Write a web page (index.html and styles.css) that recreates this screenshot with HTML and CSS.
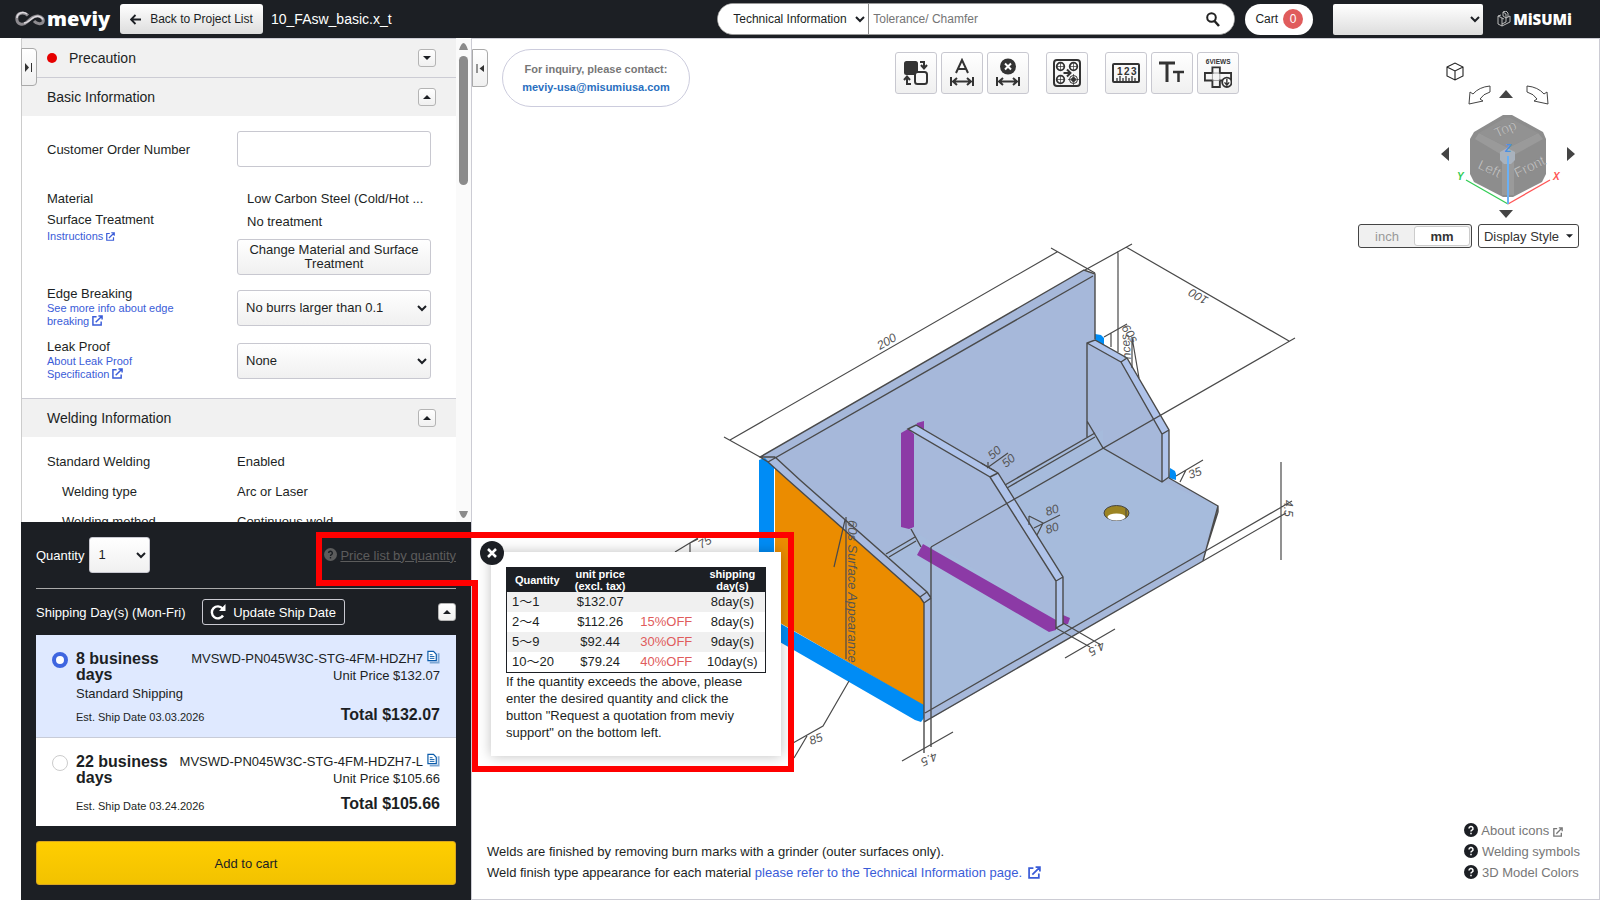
FILE: index.html
```html
<!DOCTYPE html>
<html lang="en">
<head>
    <meta charset="utf-8">
    <title>meviy</title>
    <link rel="stylesheet" href="styles.css">
</head>
<body>
    <!-- Shared icons -->
    <svg class="defs">
        <symbol id="ext" viewBox="0 0 12 12"><path d="M5 2H1v9h9V7M7 1h4v4M11 1L4 8" fill="none" stroke="currentColor" stroke-width="1.6"/></symbol>
        <symbol id="help" viewBox="0 0 14 14"><circle cx="7" cy="7" r="7" fill="currentColor"/><path d="M5 5.500a2 2 0 1 1 3 1.700q-1 .5-1 1.300M7 9.700v1.500" fill="none" stroke="var(--mark)" stroke-width="1.500"/></symbol>
        <symbol id="copy" viewBox="0 0 14 14"><path d="M3 13h9.500V3" fill="none" stroke="#7fa8d4" stroke-width="2"/><path d="M1 1h6l3 3v7H1z" fill="#fff" stroke="#0b5cab" stroke-width="1.300"/><path d="M3 4.500h3M3 6.500h5M3 8.500h5" stroke="#0b5cab"/></symbol>
        <symbol id="up" viewBox="0 0 8 4"><path d="M0 4L4 0L8 4z" fill="#1c1f24"/></symbol>
        <symbol id="down" viewBox="0 0 8 4"><path d="M0 0L4 4L8 0z" fill="#1c1f24"/></symbol>
    </svg>

    <!-- Header -->
    <header class="header">
        <a class="logo" href="#">
            <svg width="30" height="16" viewBox="0 0 30 16"><path d="M13 4.500C9 .5 1.800 1.500 1.800 7.500s6.200 7.500 10.200 3.500S19 4.500 23 5s6 3.500 5 6-6 2.500-9-1" fill="none" stroke="#8d8a8f" stroke-width="3"/><path d="M12 3C8 0 2 2 2 7M9 12c6 0 8-8 15-6.500q3 .8 4 3" fill="none" stroke="#dedbe0" stroke-width="1.500"/></svg>
            <span>meviy</span>
        </a>
        <button class="back">
            <svg width="11" height="11" viewBox="0 0 11 11"><path d="M11 5.500H1M5.500 1L1 5.500L5.500 10" fill="none" stroke="#1c1f24" stroke-width="1.800"/></svg>
            Back to Project List
        </button>
        <span class="filename">10_FAsw_basic.x_t</span>
        <form class="search">
            <select aria-label="Search category"><option>Technical Information</option></select>
            <input type="text" placeholder="Tolerance/ Chamfer" aria-label="Search">
            <button type="button" aria-label="Search">
                <svg width="14" height="15" viewBox="0 0 14 15"><circle cx="5.500" cy="5.500" r="4.300" fill="none" stroke="#222" stroke-width="2"/><path d="M8.500 9l4.500 5" stroke="#222" stroke-width="2.500"/></svg>
            </button>
        </form>
        <button class="cart">Cart <span>0</span></button>
        <select class="account" aria-label="Account"><option></option></select>
        <a class="misumi" href="#">
            <svg width="14" height="16" viewBox="0 0 14 16"><path d="M1 5l4 2v8l-4-2zM5 7l2 1M5 15l8-4V5l-4 2v4l-4 2M9 7L6 5V1l3-1 2 2v4M1 5l3-1M6 1l3 2v4" fill="none" stroke="#ccc" stroke-width=".9"/></svg>
            <span>MiSUMi</span>
        </a>
    </header>

    <main class="main">
        <aside class="panel">
            <button class="tab tab-left" aria-label="Expand panel"><svg width="8" height="9" viewBox="0 0 8 9"><path d="M0 0v9l4-4.500z" fill="#333"/><path d="M6.500 0v9" stroke="#333"/></svg></button>

            <div class="scroll">
                <div class="sections">
                    <div class="section-head">
                        <i class="dot"></i><span class="precaution">Precaution</span>
                        <button class="fold" aria-label="Open"><svg width="8" height="4"><use href="#down"/></svg></button>
                    </div>

                    <div class="section-head">
                        <span>Basic Information</span>
                        <button class="fold" aria-label="Close"><svg width="8" height="4"><use href="#up"/></svg></button>
                    </div>
                    <div class="basic">
                        <div class="row order">
                            <label for="order">Customer Order Number</label>
                            <input id="order" type="text">
                        </div>
                        <div class="row material">
                            <div>
                                <p>Material</p>
                                <p>Surface Treatment</p>
                                <a href="#">Instructions <svg width="9" height="9"><use href="#ext"/></svg></a>
                            </div>
                            <div>
                                <p class="value">Low Carbon Steel (Cold/Hot ...</p>
                                <p class="value second">No treatment</p>
                                <button class="change">Change Material and Surface Treatment</button>
                            </div>
                        </div>
                        <div class="row option">
                            <div>
                                <label for="edge">Edge Breaking</label>
                                <a href="#">See more info about edge breaking <svg width="11" height="11"><use href="#ext"/></svg></a>
                            </div>
                            <select id="edge"><option>No burrs larger than 0.1</option></select>
                        </div>
                        <div class="row option">
                            <div>
                                <label for="leak">Leak Proof</label>
                                <a href="#">About Leak Proof Specification <svg width="11" height="11"><use href="#ext"/></svg></a>
                            </div>
                            <select id="leak"><option>None</option></select>
                        </div>
                    </div>

                    <div class="section-head">
                        <span>Welding Information</span>
                        <button class="fold" aria-label="Close"><svg width="8" height="4"><use href="#up"/></svg></button>
                    </div>
                    <dl class="welding">
                        <dt>Standard Welding</dt><dd>Enabled</dd>
                        <dt class="sub">Welding type</dt><dd>Arc or Laser</dd>
                        <dt class="sub">Welding method</dt><dd>Continuous weld</dd>
                    </dl>
                </div>
                <div class="scrollbar">
                    <svg width="9" height="7" viewBox="0 0 9 7"><path d="M0 7Q4.500-7 9 7z" fill="#8b8b8b"/></svg>
                    <i></i>
                    <svg class="end" width="9" height="7" viewBox="0 0 9 7"><path d="M0 0Q4.500 14 9 0z" fill="#8b8b8b"/></svg>
                </div>
            </div>

            <!-- Quantity and shipping -->
            <div class="quote">
                <div class="quantity">
                    <label for="qty">Quantity</label>
                    <select id="qty"><option>1</option></select>
                    <a href="#"><svg width="13" height="13"><use href="#help"/></svg> <span>Price list by quantity</span></a>
                </div>
                <div class="shipping">
                    <span>Shipping Day(s) (Mon-Fri)</span>
                    <button class="update"><svg width="16" height="16" viewBox="0 0 16 16"><path d="M12.500 4.500A6 6 0 1 0 13 11.500" fill="none" stroke="#fff" stroke-width="2.400"/><path d="M15.500 0v7H9z" fill="#fff"/></svg>Update Ship Date</button>
                    <button class="fold" aria-label="Close"><svg width="8" height="4"><use href="#up"/></svg></button>
                </div>
                <div class="plans">
                    <label class="plan selected">
                        <input type="radio" name="plan" checked>
                        <span class="days"><b>8 business days</b><span class="standard">Standard Shipping</span><small>Est. Ship Date 03.03.2026</small></span>
                        <span class="price"><span>MVSWD-PN045W3C-STG-4FM-HDZH7 <svg width="13" height="14"><use href="#copy"/></svg></span><span>Unit Price $132.07</span><b>Total $132.07</b></span>
                    </label>
                    <label class="plan">
                        <input type="radio" name="plan">
                        <span class="days"><b>22 business days</b><small>Est. Ship Date 03.24.2026</small></span>
                        <span class="price"><span>MVSWD-PN045W3C-STG-4FM-HDZH7-L <svg width="13" height="14"><use href="#copy"/></svg></span><span>Unit Price $105.66</span><b>Total $105.66</b></span>
                    </label>
                </div>
                <button class="add">Add to cart</button>

                <!-- Price list popup -->
                <div class="popup">
                    <button class="close" aria-label="Close"><svg width="10" height="10" viewBox="0 0 10 10"><path d="M1 1l8 8M9 1L1 9" stroke="#fff" stroke-width="2.500"/></svg></button>
                    <table>
                        <tr><th>Quantity</th><th>unit price<br>(excl. tax)</th><th></th><th>shipping<br>day(s)</th></tr>
                        <tr><td>1～1</td><td>$132.07</td><td></td><td>8day(s)</td></tr>
                        <tr><td>2～4</td><td>$112.26</td><td>15%OFF</td><td>8day(s)</td></tr>
                        <tr><td>5～9</td><td>$92.44</td><td>30%OFF</td><td>9day(s)</td></tr>
                        <tr><td>10～20</td><td>$79.24</td><td>40%OFF</td><td>10day(s)</td></tr>
                    </table>
                    <p>If the quantity exceeds the above, please enter the desired quantity and click the button "Request a quotation from meviy support" on the bottom left.</p>
                </div>
                <svg class="marker" width="478" height="240" viewBox="0 0 478 240"><path d="M3 3H475V237H159V51H3z" fill="none" stroke="#f00" stroke-width="6"/></svg>
            </div>
        </aside>

        <section class="viewer">
            <svg class="model" viewBox="472 39 1127 860">
                <!-- plates -->
                <path d="M760 457L1084 270L1095 275V339L1127 358L1169 430V478L1218 506L1203 561L925 722V603L775 466z" fill="#a6b8da"/>
                <path d="M1003 487L1103 430L1103 448L1162 482L1218 506L1202 553L925 713L924 603L886 554z" fill="#a6bbdc"/>
                <path d="M775 468L920 597L924 603V706L775 620z" fill="#eb8c00"/>
                <path d="M759 460L765 458L774 467V620L924 705V718L921 722L915 720L759 630z" fill="#008cf5"/>
                <g fill="#008cf5"><path d="M1095 334l6 1 3 3v7l-9-4z"/><path d="M1170 468l5 3 1 3v6l-7-2z"/></g>
                <path d="M775 457L927 592L931 597V717L924 721V603L920 597L768 462z" fill="#a9bbe0"/>
                <path d="M908 429L916 425L998 473L1063 577V624L1056 628L1049 617L911 529z" fill="#a7b9db"/>
                <path d="M901 433L908 429L914 434V527L909 529L901 527zM917 423L924 421V430L916 426z" fill="#8c3aa6"/>
                <path d="M923 544L1056 620V630L1049 632L917 555zM1063 615L1070 618L1068 624H1063z" fill="#8c3aa6"/>
                <path d="M908 429L916 425L998 473L1063 577V624L1056 628V581L990 477z" fill="#afc3ea"/>
                <path d="M1087 343L1095 340L1127 358L1169 430V477L1162 482V434L1121 362z" fill="#afc3ea"/>
                <g fill="none" stroke="#4a4a4a" stroke-width="1.400">
                    <path d="M1095 339V274L1084 270L760 457L768 462L1093 276M760 457L775 457M768 462L788 480L920 597L924 603V722L1203 561M775 457L800 480L927 592L931 598L924 603M920 597L927 592M931 547V747M924 722V753M925 713L1202 553"/>
                    <path d="M1087 437V343L1095 340L1127 358L1169 430V477L1162 482L1103 448L1087 421M1087 343L1121 362L1127 358M1121 362L1162 434L1169 430M1162 434V482M1169 478L1218 506L1203 561M1218 506V512L1205 553"/>
                    <path d="M908 429L916 425L998 473L1063 577V624L1056 628V581L990 477zM990 477L998 473M1056 581L1063 577M911 529L921 547"/>
                    <path d="M886 554L915 537M889 557L916 541M1005 485L1095 433M1007 488L1095 437"/>
                </g>
                <!-- hole -->
                <ellipse cx="1116.500" cy="513" rx="12.500" ry="7.500" fill="#9c8423" stroke="#444"/>
                <ellipse cx="1116.500" cy="517" rx="9" ry="3.500" fill="#fff"/>
                <path d="M1126 508v9" stroke="#444"/>
                <!-- dimension lines -->
                <g fill="none" stroke="#4a4a4a" stroke-width="1.200">
                    <path d="M724 437L760 457M730 440L1057 252M1051 248L1095 273M1085 270L1132 244M1126 247L1289 341M1118 251V352M931 547L1295 338"/>
                    <path d="M1104 337L1127 324M1111 333V347M1132 337V368M1132 337L1139 378"/>
                    <path d="M1176 476L1203 460M1186 470L1180 482M1281 462V560M1202 553L1292 501M1203 561L1286 513"/>
                    <path d="M1065 658L1115 629M1056 628L1090 647M1063 623L1101 645M902 761L953 732"/>
                    <path d="M849 681L823 726L793 743M807 736L794 758M675 552L698 538M690 543v10M690 543L698 539"/>
                    <path d="M846 517V659M845 520L834 567M987 468L1008 453M981 463L995 471M988 462v6"/>
                    <path d="M1060 515L1034 528M1029 516L1043 523L1037 535M1029 516V525"/>
                </g>
                <g class="dims">
                    <text transform="translate(880 350) rotate(-30)">200</text>
                    <text transform="translate(1209 298) rotate(210)">100</text>
                    <text transform="translate(992 460) rotate(-40)">50</text>
                    <text transform="translate(1006 468) rotate(-40)">50</text>
                    <text transform="translate(1047 516) rotate(-18)">80</text>
                    <text transform="translate(1047 534) rotate(-18)">80</text>
                    <text transform="translate(1190 479) rotate(-20)">35</text>
                    <text transform="translate(811 745) rotate(-20)">85</text>
                    <text transform="translate(701 549) rotate(-30)">75</text>
                    <text transform="translate(935 752) rotate(155)">4.5</text>
                    <text transform="translate(1102 641) rotate(150)">4.5</text>
                    <text transform="translate(1284 500) rotate(90)">4.5</text>
                    <text class="surface" transform="translate(848 520) rotate(90)">60s Surface Appearance</text>
                    <text transform="translate(1131 359) rotate(-95)">nces</text>
                    <text transform="translate(1121 328) rotate(55)">60s</text>
                </g>
            </svg>

            <button class="tab" aria-label="Collapse panel"><svg width="8" height="9" viewBox="0 0 8 9"><path d="M8 1v7L3.500 4.500z" fill="#333"/><path d="M1 0v9" stroke="#333"/></svg></button>

            <div class="inquiry">For inquiry, please contact:<br><a href="#">meviy-usa@misumiusa.com</a></div>

            <div class="tools">
                <button aria-label="Swap"><svg viewBox="0 0 28 28"><rect x="2" y="2" width="14" height="14" rx="2.500" fill="#333"/><rect x="13" y="13" width="12" height="12" rx="2.500" fill="#f8f8f8" stroke="#333" stroke-width="2"/><path d="M18 3h4v5M19 6l3 3.500L25 6M9 25H5v-6M2 21l3-3.500L8 21" fill="none" stroke="#333" stroke-width="2"/></svg></button>
                <button aria-label="Text dimension"><svg viewBox="0 0 28 28" fill="none" stroke="#333" stroke-width="2"><path d="M8 14L14 1l6 13M10 10h8M3 18v9M25 18v9M5 22.500h18M9 19l-4 3.500L9 26M19 19l4 3.500L19 26"/></svg></button>
                <button aria-label="Delete dimension"><svg viewBox="0 0 28 28" fill="none" stroke="#333" stroke-width="2"><circle cx="14" cy="7.500" r="8" fill="#333" stroke="none"/><path d="M11 4.500l6 6M17 4.500l-6 6" stroke="#fff"/><path d="M3 18v9M25 18v9M5 22.500h18M9 19l-4 3.500L9 26M19 19l4 3.500L19 26"/></svg></button>
                <button class="apart" aria-label="Holes"><svg viewBox="0 0 28 28" fill="none" stroke="#333"><rect x="1" y="1" width="26" height="26" rx="3" stroke-width="2"/><g stroke-width="1.800"><circle cx="7.500" cy="7.500" r="3.800"/><circle cx="20.500" cy="7.500" r="3.800"/><circle cx="7.500" cy="20.500" r="3.800"/></g><circle cx="20.500" cy="20.500" r="4"/><circle cx="20.500" cy="20.500" r="2" fill="#333"/><path d="M7.500 3v9M3 7.500h9M20.500 3v9M16 7.500h9M7.500 16v9M3 20.500h9M20.500 15v11M15 20.500h11" stroke-width=".7"/><path d="M10.500 14h6M14 10.500l3.500 3.500-3.500 3.500" stroke-width="2"/></svg></button>
                <button class="apart" aria-label="Measure"><svg viewBox="0 0 28 28"><rect x="1" y="5" width="26" height="18" rx="1" fill="none" stroke="#333" stroke-width="2"/><path d="M5 22v-3M8 22v-5M11 22v-3M14 22v-5M17 22v-3M20 22v-5M23 22v-3" stroke="#333" stroke-width="1.300"/><text x="5" y="16" font-size="10">1</text><text x="12" y="16" font-size="10">2</text><text x="19" y="16" font-size="10">3</text></svg></button>
                <button aria-label="Text size"><svg viewBox="0 0 28 28"><path d="M1 4h16M9 4v19" stroke="#333" stroke-width="3"/><path d="M15 13h11M20.500 13v10" stroke="#333" stroke-width="2.500"/></svg></button>
                <button aria-label="6 views"><svg viewBox="0 0 30 32"><text x="2" y="6" font-size="7">6VIEWS</text><path d="M9 10h8v6h12v8H17v7H9v-7H1v-8h8z" fill="none" stroke="#333" stroke-width="2"/><path d="M9 16h8v8H9z" fill="none" stroke="#777" stroke-width=".7"/><circle cx="24.500" cy="26" r="5" fill="#fff" stroke="#333" stroke-width="2"/><path d="M24.500 22.500v6M22 26l2.500 3 2.500-3" fill="none" stroke="#333" stroke-width="1.500"/></svg></button>
            </div>

            <div class="view-controls">
                <svg width="140" height="158" viewBox="1440 61 140 158">
                    <path d="M1448 67l8-4 8 4v9l-8 4-8-4zM1448 67l8 4 8-4M1456 71v9" fill="none" stroke="#222" stroke-width="1.100"/>
                    <path d="M1491 86v6q-7 2-10 7l3 2-14 3 1-12 3 2q6-7 17-8zM1528 86v6q7 2 10 7l-3 2 14 3-1-12-3 2q-6-7-17-8z" fill="#fff" stroke="#444"/>
                    <path d="M1500 98l7-8 7 8zM1500 210l7 8 7-8zM1450 147v14l-8-7zM1568 147v14l8-7z" fill="#444"/>
                    <path d="M1504 115h9l31 17 3 7v35l-4 8-29 15h-10l-29-15-4-8v-35l4-7z" fill="#8d8d8d"/>
                    <path d="M1476 139l4-6 29 15 30-15 5 6-29 16v40h-12v-40z" fill="#9a9a9a"/>
                    <path d="M1480 133l26-15h5l28 15-30 15z" fill="#929292"/>
                    <path d="M1508 148l8 4v8l-4 4h-7l-4-4v-8z" fill="#a9b2bd"/>
                    <g class="faces"><text transform="translate(1498 138) rotate(-25)">Top</text><text transform="translate(1478 168) rotate(25)">Left</text><text transform="translate(1518 178) rotate(-26)">Front</text></g>
                    <path d="M1509 204L1467 180" stroke="#3c5" stroke-width="1.300"/><path d="M1509 204L1551 180" stroke="#f55" stroke-width="1.300"/><path d="M1509 204V156" stroke="#6ab0f5" stroke-width="2"/>
                    <g class="axis"><text x="1458" y="180" fill="#3c5">Y</text><text x="1554" y="180" fill="#f55">X</text><text x="1506" y="152" fill="#4a90e0">Z</text></g>
                </svg>
                <div class="units">
                    <div class="switch"><button>inch</button><button class="on">mm</button></div>
                    <button class="style">Display Style <svg width="7" height="4"><use href="#down"/></svg></button>
                </div>
            </div>

            <footer class="notes">
                <p>Welds are finished by removing burn marks with a grinder (outer surfaces only).<br>Weld finish type appearance for each material <a href="#">please refer to the Technical Information page. <svg width="13" height="13"><use href="#ext"/></svg></a></p>
                <nav>
                    <a href="#"><svg width="14" height="14"><use href="#help"/></svg> About icons <svg width="10" height="10"><use href="#ext"/></svg></a>
                    <a href="#"><svg width="14" height="14"><use href="#help"/></svg> Welding symbols</a>
                    <a href="#"><svg width="14" height="14"><use href="#help"/></svg> 3D Model Colors</a>
                </nav>
            </footer>
        </section>
    </main>
</body>
</html>
```
FILE: styles.css
```css
* {
    box-sizing: border-box;
}

body {
    margin: 0;
    height: 100vh;
    display: flex;
    flex-direction: column;
    overflow: hidden;
    color: #1c1f24;
    background: #fff;
    font-family: "Liberation Sans", "Noto Sans CJK JP", sans-serif;
    font-size: 13px;
}

button, select, input {
    margin: 0;
    font-family: inherit;
    font-size: 13px;
    color: #1c1f24;
}

button {
    padding: 0;
    display: flex;
    align-items: center;
    justify-content: center;
    border: 1px solid #c8c8d0;
    border-radius: 3px;
    background: linear-gradient(#fff, #f0f0f0);
}

p, dl, dd {
    margin: 0;
}

a {
    color: #3a5cd8;
    text-decoration: none;
}

svg {
    flex: none;
}

.defs {
    position: absolute;
    width: 0;
    height: 0;
}

/* Header */
.header {
    flex: none;
    height: 38px;
    padding: 0 28px 0 15px;
    display: flex;
    align-items: center;
    background: #1c1f24;
    color: #fff;
}

.logo {
    display: flex;
    align-items: center;
    gap: 2px;
    width: 105px;
    color: #fff;
    font: 800 20px/26px "Open Sans", sans-serif;
}

.back {
    width: 143px;
    height: 30px;
    gap: 9px;
    border: 0;
    background: linear-gradient(#fff, #ddd);
    font-size: 12px;
}

.filename {
    margin: 0 auto 0 8px;
    font-size: 14px;
}

.search {
    display: flex;
    width: 518px;
    height: 32px;
    border-radius: 16px;
    border: 1px solid #999;
    background: #fff;
    overflow: hidden;
}

.search select {
    width: 151px;
    padding-left: 11px;
    border: 0;
    border-right: 1px solid #888;
    border-radius: 0;
    background: #fff;
    font-size: 12px;
}

.search input {
    flex: 1;
    border: 0;
    padding: 0 4px;
    font-size: 12px;
}

.search button {
    width: 42px;
    border: 0;
    background: #fff;
}

.cart {
    width: 68px;
    height: 31px;
    margin: 0 20px 0 10px;
    gap: 5px;
    border: 0;
    border-radius: 16px;
    background: #fff;
    font-size: 12px;
}

.cart span {
    width: 20px;
    line-height: 20px;
    border-radius: 50%;
    background: #e05c5c;
    color: #fff;
}

.account {
    width: 150px;
    height: 31px;
    padding-right: 5px;
    border: 0;
    border-radius: 2px;
    background: linear-gradient(#fff, #ddd);
}

.misumi {
    display: flex;
    align-items: center;
    gap: 2px;
    margin-left: 14px;
    color: #fff;
    font: 800 15px/20px "Open Sans", sans-serif;
}

/* Left panel */
.main {
    flex: 1;
    min-height: 0;
    display: flex;
}

.panel {
    position: relative;
    flex: none;
    width: 450px;
    margin-left: 21px;
    display: flex;
    flex-direction: column;
}

.scroll {
    flex: 1;
    min-height: 0;
    display: flex;
    border-left: 1px solid #ccc;
    overflow: hidden;
}

.sections {
    flex: 1;
}

.section-head {
    display: flex;
    align-items: center;
    height: 39px;
    padding: 0 20px 0 25px;
    border-top: 1px solid #ccccd4;
    background: #f1f1f1;
    font-size: 14px;
}

.dot {
    width: 10px;
    height: 10px;
    border-radius: 50%;
    background: #e60000;
}

.precaution {
    margin-left: 12px;
}

.fold {
    width: 18px;
    height: 18px;
    margin-left: auto;
    border-color: #b4b4b4;
}

.tab {
    position: absolute;
    left: 0;
    top: 10px;
    z-index: 1;
    width: 16px;
    height: 38px;
    border-color: #aaa;
    border-radius: 0 4px 4px 0;
}

.basic {
    padding: 15px 25px 6px;
}

.row {
    display: grid;
    grid-template-columns: 190px 194px;
}

.order {
    align-items: center;
    margin-bottom: 21px;
}

.order input {
    height: 36px;
    border: 1px solid #c8c8d0;
    border-radius: 3px;
}

.material {
    margin-bottom: 11px;
    line-height: 21px;
}

.row a {
    display: block;
    font-size: 11px;
    line-height: 13px;
}

.row a svg {
    vertical-align: -1px;
}

.value {
    padding-left: 10px;
}

.second {
    margin-top: 2px;
}

.change {
    width: 100%;
    height: 36px;
    margin-top: 7px;
    line-height: 14px;
}

.option {
    min-height: 53px;
    align-items: start;
}

.option div {
    width: 140px;
}

.option label {
    display: block;
    line-height: 16px;
}

.option select, .quantity select {
    height: 36px;
    margin-top: 4px;
    padding: 0 8px 1px 4px;
    border: 1px solid #c8c8d0;
    border-radius: 3px;
    background: linear-gradient(#fff, #f0f0f0);
}

.welding {
    display: grid;
    grid-template-columns: 190px 1fr;
    padding: 10px 25px;
    line-height: 30px;
}

.sub {
    padding-left: 15px;
}

.scrollbar {
    width: 15px;
    padding: 5px 3px 4px;
    display: flex;
    flex-direction: column;
    background: #fafafa;
}

.scrollbar i {
    height: 129px;
    margin-top: 6px;
    border-radius: 5px;
    background: #8b8b8b;
}

.end {
    margin-top: auto;
}

/* Quantity and shipping */
.quote {
    position: relative;
    z-index: 2;
    flex: none;
    padding: 15px;
    background: #1c1f24;
}

.quantity {
    display: flex;
    align-items: center;
    padding-bottom: 15px;
    border-bottom: 1px solid #aaa;
    color: #fff;
}

.quantity select {
    width: 61px;
    margin: 0 auto 0 5px;
}

.quantity a {
    --mark: #1c1f24;
    display: flex;
    gap: 3px;
    color: #5c5c5c;
}

.quantity a span {
    text-decoration: underline;
}

.shipping {
    display: flex;
    align-items: center;
    margin: 10px 0;
    color: #fff;
}

.update {
    width: 143px;
    height: 26px;
    margin-left: 16px;
    gap: 7px;
    background: none;
    color: #fff;
}

.plans {
    background: #fff;
}

.plan {
    display: flex;
    min-height: 88px;
    padding: 15px 16px 12px;
}

.plan.selected {
    min-height: 103px;
    border-bottom: 1px solid #c8ccd8;
    background: #dfe9ff;
}

.plan input {
    appearance: none;
    flex: none;
    width: 16px;
    height: 16px;
    margin: 2px 8px 0 0;
    border: 1px solid #ccc;
    border-radius: 50%;
    background: #fff;
}

.plan input:checked {
    border: 4px solid #3f66e0;
}

.days {
    width: 92px;
    margin: 1px 0;
    display: flex;
    flex-direction: column;
}

.plan b {
    font-size: 16px;
    line-height: 16px;
}

.standard {
    margin-top: 2px;
    line-height: 18px;
    white-space: nowrap;
}

.plan small {
    margin-top: auto;
    font-size: 11px;
    line-height: 14px;
    white-space: nowrap;
}

.price {
    flex: 1;
    display: flex;
    flex-direction: column;
    align-items: flex-end;
    line-height: 17px;
    white-space: nowrap;
}

.price > span {
    display: flex;
    gap: 4px;
}

.price b {
    margin: auto 0 2px;
}

.add {
    width: 100%;
    height: 44px;
    margin-top: 15px;
    border-color: #d9a520;
    background: linear-gradient(#ffce00, #f2c200);
}

/* Price list popup */
.popup {
    position: absolute;
    left: 470px;
    top: 30px;
    width: 290px;
    height: 204px;
    padding: 15px;
    background: #fff;
    box-shadow: 0 0 12px rgba(0, 0, 0, 0.25);
}

.popup p {
    line-height: 17px;
}

.close {
    position: absolute;
    left: -11px;
    top: -11px;
    width: 24px;
    height: 24px;
    border: 0;
    border-radius: 50%;
    background: #1c1f24;
}

.popup table {
    width: 260px;
    border: 1px solid #1c1f24;
    border-collapse: collapse;
}

.popup th {
    padding: 0;
    background: #1c1f24;
    color: #fff;
    font-size: 11px;
    line-height: 12px;
}

.popup td {
    height: 20px;
    padding: 0;
    line-height: 20px;
    text-align: center;
}

.popup td:first-child {
    padding-left: 5px;
    text-align: left;
}

.popup td:nth-child(3) {
    color: #e05c5c;
}

.popup tr:nth-child(even) {
    background: #f0f0f0;
}

.marker {
    position: absolute;
    left: 295px;
    top: 10px;
    pointer-events: none;
}

/* 3D viewer */
.viewer {
    position: relative;
    flex: 1;
    border: 1px solid #ccccd4;
}

.model {
    position: absolute;
    left: 0;
    top: 0;
    width: 100%;
    height: 100%;
}

.dims {
    fill: #555;
    font-size: 12px;
    font-style: italic;
}

.surface {
    font-size: 13px;
}

.inquiry {
    position: absolute;
    left: 30px;
    top: 10px;
    width: 188px;
    height: 58px;
    padding-top: 10px;
    border: 1px solid #ccd;
    border-radius: 29px;
    color: #777;
    font-size: 11px;
    font-weight: bold;
    line-height: 18px;
    text-align: center;
    white-space: nowrap;
}

.inquiry a {
    color: #2a6fc0;
}

.tools {
    position: absolute;
    right: 360px;
    top: 13px;
    display: flex;
    gap: 4px;
}

.tools button {
    width: 42px;
    height: 42px;
}

.tools .apart {
    margin-left: 13px;
}

.tools svg {
    width: 28px;
    height: 30px;
}

.tools text {
    fill: #333;
    font-weight: bold;
}

.view-controls {
    position: absolute;
    right: 20px;
    top: 22px;
    display: flex;
    flex-direction: column;
    align-items: flex-end;
    gap: 5px;
}

.faces {
    fill: #ccc;
    stroke: #777;
    stroke-width: 0.3px;
    font-size: 14px;
}

.axis {
    font-size: 10px;
    font-weight: bold;
    font-style: italic;
}

.units {
    display: flex;
    gap: 6px;
}

.switch {
    display: flex;
    width: 114px;
    height: 24px;
    padding: 1px;
    border: 1px solid #444;
    border-radius: 3px;
    background: #f0f0f0;
}

.switch button {
    flex: 1;
    border: 0;
    background: none;
    color: #999;
}

.switch .on {
    border: 1px solid #ccc;
    background: #fff;
    color: #333;
    font-weight: bold;
}

.style {
    width: 101px;
    height: 24px;
    gap: 7px;
    border-color: #444;
    background: #fff;
    color: #333;
}

.notes {
    position: absolute;
    left: 15px;
    right: 19px;
    bottom: 16px;
    display: flex;
    align-items: flex-end;
    justify-content: space-between;
    line-height: 21px;
}

.notes svg {
    vertical-align: -2px;
}

.notes p a svg {
    margin-left: 2px;
}

.notes nav {
    --mark: #fff;
    display: flex;
    flex-direction: column;
}

.notes nav a {
    color: #777;
}

.notes nav svg:first-child {
    color: #1c1f24;
}
```
